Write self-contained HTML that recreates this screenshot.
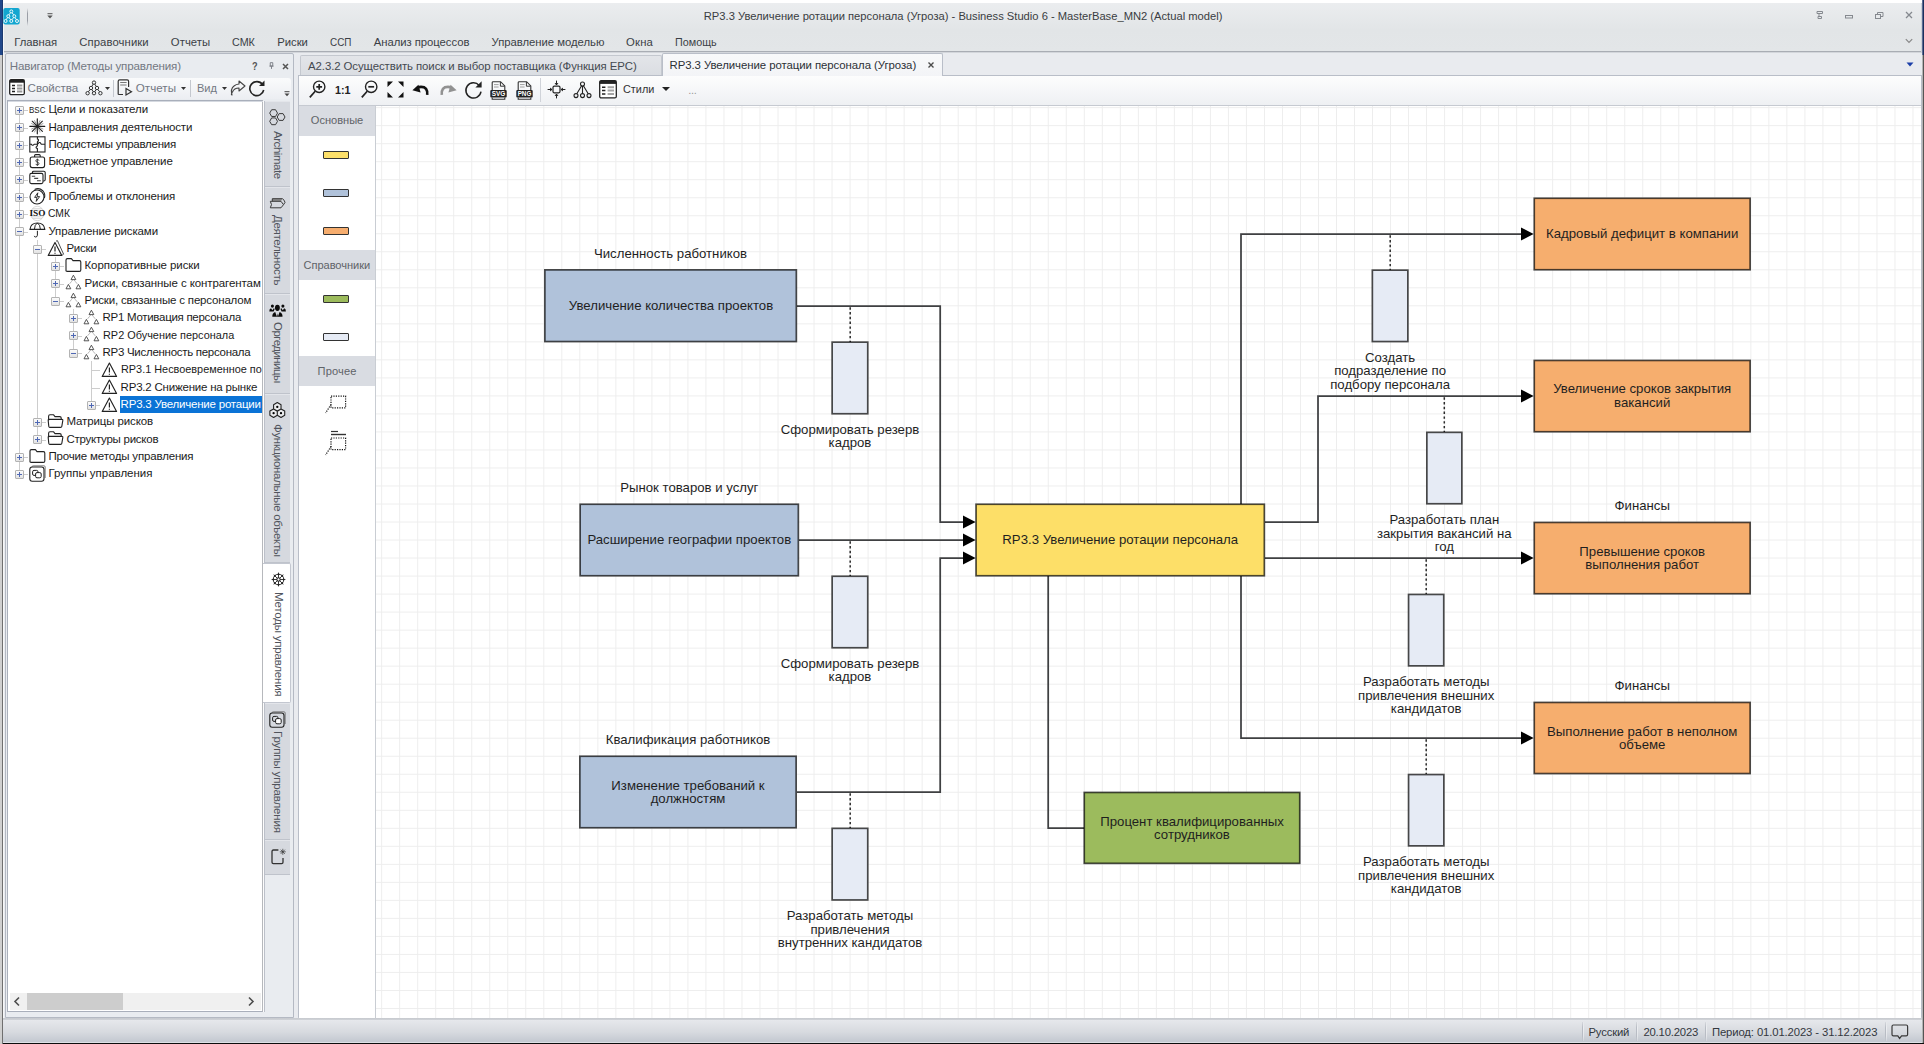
<!DOCTYPE html>
<html><head><meta charset="utf-8"><title>RP3.3</title>
<style>
html,body{margin:0;padding:0;}
body{width:1924px;height:1044px;position:relative;overflow:hidden;background:#e9ebef;font-family:"Liberation Sans", sans-serif;}
div{box-sizing:border-box;}
svg{position:absolute;overflow:visible;}
.dt{position:absolute;text-align:center;font-size:13.2px;line-height:13.45px;color:#1f1f1f;white-space:pre;}
</style></head><body>
<div style="position:absolute;left:0px;top:0px;width:1924px;height:3px;background:#ffffff"></div>
<div style="position:absolute;left:0px;top:3px;width:1924px;height:49px;background:linear-gradient(#ebedef,#e2e5e7 55%,#e3e6e8)"></div>
<div style="position:absolute;left:0px;top:51px;width:1924px;height:1px;background:#a9adb4"></div>
<div style="position:absolute;left:0px;top:52px;width:1924px;height:1px;background:#d3d6db"></div>
<div style="position:absolute;left:0px;top:0px;width:3px;height:55px;background:#21488b"></div>
<div style="position:absolute;left:2px;top:0px;width:1px;height:55px;background:#1c3a70"></div>
<div style="position:absolute;left:0px;top:55px;width:2px;height:989px;background:#cfcfcf"></div>
<div style="position:absolute;left:2px;top:55px;width:1px;height:989px;background:#6f6f6f"></div>
<div style="position:absolute;left:3px;top:3px;width:1px;height:1039px;background:#f6f7f8"></div>
<div style="position:absolute;left:1921px;top:3px;width:1px;height:1040px;background:#cfd2d8"></div>
<div style="position:absolute;left:1922px;top:0px;width:2px;height:55px;background:#1b2f5c"></div>
<div style="position:absolute;left:1922px;top:0px;width:1px;height:55px;background:#5a6c94"></div>
<div style="position:absolute;left:1922px;top:55px;width:1px;height:988px;background:#b4b4b4"></div>
<div style="position:absolute;left:1923px;top:55px;width:1px;height:988px;background:#555"></div>
<svg style="left:3px;top:8px" width="17" height="17" viewBox="0 0 17 17">
<rect x="0.3" y="0" width="16.4" height="16.4" rx="2" fill="#13a6d0"/>
<g fill="none" stroke="#fff" stroke-width="0.9">
<circle cx="8.3" cy="3.4" r="1.5"/><circle cx="5.3" cy="8.2" r="1.5"/><circle cx="11.3" cy="8.2" r="1.5"/>
<circle cx="2.6" cy="13" r="1.5"/><circle cx="8.3" cy="13" r="1.5"/><circle cx="14" cy="13" r="1.5"/>
<path d="M7.5 4.8L6 6.8M9.1 4.8L10.6 6.8M4.5 9.6L3.3 11.6M6.1 9.6L7.5 11.6M10.5 9.6L9.1 11.6M12.1 9.6L13.3 11.6"/></g></svg>
<div style="position:absolute;left:27px;top:8px;width:1px;height:18px;background:linear-gradient(rgba(150,154,160,0),#9a9ea6 30%,#9a9ea6 70%,rgba(150,154,160,0))"></div>
<svg style="left:47px;top:13px" width="6" height="6" viewBox="0 0 6 6"><path d="M0.5 0.7H5.5" stroke="#555" stroke-width="1"/><path d="M0.3 2.6H5.7L3 5.4Z" fill="#555"/></svg>
<div style="position:absolute;left:703.80px;top:8.04px;height:16px;line-height:16px;font-size:11.2px;font-weight:400;color:#3a3d42;letter-spacing:-0.005px;white-space:pre;">RP3.3 Увеличение ротации персонала (Угроза) - Business Studio 6 - MasterBase_MN2 (Actual model)</div>
<svg style="left:1812px;top:8px" width="110" height="14" viewBox="0 0 110 14" fill="none" stroke="#85898f" stroke-width="1">
<path d="M5 3.5H10.5V5.5H5ZM7 5.5V8.5M6 8.5H9.5V10.5H6Z"/>
<rect x="33.5" y="7.5" width="7" height="2.5"/>
<rect x="63.5" y="6.5" width="5" height="4"/><path d="M65.5 6.5V4.5H71V8.5H68.5"/>
<path d="M94 4L100 10M100 4L94 10" stroke-width="1.3"/>
</svg>
<svg style="left:1905px;top:38px" width="8" height="7" viewBox="0 0 8 7"><path d="M0.8 1.2L4 4.5L7.2 1.2" fill="none" stroke="#888" stroke-width="1.2"/></svg>
<div style="position:absolute;left:14.20px;top:33.54px;height:16px;line-height:16px;font-size:11.3px;font-weight:400;color:#3b3f46;letter-spacing:-0.017px;white-space:pre;">Главная</div>
<div style="position:absolute;left:79.20px;top:33.54px;height:16px;line-height:16px;font-size:11.3px;font-weight:400;color:#3b3f46;letter-spacing:0.105px;white-space:pre;">Справочники</div>
<div style="position:absolute;left:170.80px;top:33.54px;height:16px;line-height:16px;font-size:11.3px;font-weight:400;color:#3b3f46;letter-spacing:0.068px;white-space:pre;">Отчеты</div>
<div style="position:absolute;left:231.90px;top:33.54px;height:16px;line-height:16px;font-size:11.3px;font-weight:400;color:#3b3f46;letter-spacing:0.000px;white-space:pre;transform-origin:0 50%;transform:scaleX(0.9529);">СМК</div>
<div style="position:absolute;left:277.30px;top:33.54px;height:16px;line-height:16px;font-size:11.3px;font-weight:400;color:#3b3f46;letter-spacing:-0.038px;white-space:pre;">Риски</div>
<div style="position:absolute;left:330.00px;top:33.54px;height:16px;line-height:16px;font-size:11.3px;font-weight:400;color:#3b3f46;letter-spacing:0.000px;white-space:pre;transform-origin:0 50%;transform:scaleX(0.8757);">ССП</div>
<div style="position:absolute;left:373.80px;top:33.54px;height:16px;line-height:16px;font-size:11.3px;font-weight:400;color:#3b3f46;letter-spacing:-0.046px;white-space:pre;">Анализ процессов</div>
<div style="position:absolute;left:491.50px;top:33.54px;height:16px;line-height:16px;font-size:11.3px;font-weight:400;color:#3b3f46;letter-spacing:-0.018px;white-space:pre;">Управление моделью</div>
<div style="position:absolute;left:626.10px;top:33.54px;height:16px;line-height:16px;font-size:11.3px;font-weight:400;color:#3b3f46;letter-spacing:0.178px;white-space:pre;">Окна</div>
<div style="position:absolute;left:675.00px;top:33.54px;height:16px;line-height:16px;font-size:11.3px;font-weight:400;color:#3b3f46;letter-spacing:0.000px;white-space:pre;transform-origin:0 50%;transform:scaleX(0.9555);">Помощь</div>
<div style="position:absolute;left:5px;top:53px;width:289px;height:965px;background:#e9ecf0;border:1px solid #b4b9c3;border-radius:2px 2px 0 0"></div>
<div style="position:absolute;left:9.70px;top:57.61px;height:16px;line-height:16px;font-size:11.6px;font-weight:400;color:#737882;letter-spacing:-0.144px;white-space:pre;">Навигатор (Методы управления)</div>
<div style="position:absolute;left:252.10px;top:57.62px;height:16px;line-height:16px;font-size:11.5px;font-weight:700;color:#555;letter-spacing:0.000px;white-space:pre;transform-origin:0 50%;transform:scaleX(0.7964);">?</div>
<svg style="left:268.5px;top:62px" width="5" height="8" viewBox="0 0 6 9"><path d="M1.5 0.5H4.5V4.5H1.5ZM0.5 4.7H5.5M3 4.7V8" fill="none" stroke="#777b82" stroke-width="1.1"/></svg>
<svg style="left:282px;top:63px" width="7" height="7" viewBox="0 0 7 7"><path d="M1 1L6 6M6 1L1 6" stroke="#555" stroke-width="1.5"/></svg>
<div style="position:absolute;left:8px;top:77.5px;width:283px;height:21px;background:linear-gradient(#fafbfc,#eceef2);border-radius:3px"></div>
<svg style="left:8.5px;top:79px" width="16" height="17" viewBox="0 0 16 17"><rect x="0.7" y="0.7" width="14.6" height="15" rx="1.5" fill="#fff" stroke="#222" stroke-width="1.3"/><rect x="0.7" y="0.7" width="14.6" height="3" fill="#222"/>
<path d="M3 6.5H6M3 9.5H6M3 12.5H6" stroke="#222" stroke-width="1.4"/><path d="M8 6.5H13.3M8 9.5H13.3M8 12.5H13.3" stroke="#9a9a9a" stroke-width="1.8"/></svg>
<div style="position:absolute;left:27.60px;top:80.31px;height:16px;line-height:16px;font-size:11.6px;font-weight:400;color:#737882;letter-spacing:-0.046px;white-space:pre;">Свойства</div>
<svg style="left:85px;top:80px" width="18" height="16" viewBox="0 0 18 16" fill="none" stroke="#333" stroke-width="1">
<circle cx="9" cy="2.6" r="1.7"/><circle cx="6" cy="8" r="1.7"/><circle cx="12" cy="8" r="1.7"/><circle cx="2.6" cy="13.2" r="1.7"/><circle cx="9" cy="13.2" r="1.7"/><circle cx="15.4" cy="13.2" r="1.7"/>
<path d="M8.2 4.1L6.8 6.4M9.8 4.1L11.2 6.4M5.2 9.5L3.4 11.7M6.8 9.5L8.2 11.7M11.2 9.5L9.8 11.7M12.8 9.5L14.6 11.7"/></svg>
<svg style="left:105px;top:87px" width="5" height="3" viewBox="0 0 5 3"><path d="M0 0H5L2.5 3Z" fill="#333"/></svg>
<div style="position:absolute;left:113px;top:80px;width:1px;height:17px;background:#c4c8cf"></div>
<svg style="left:117px;top:79px" width="16" height="17" viewBox="0 0 16 17" fill="none" stroke="#333" stroke-width="1.2">
<path d="M1.2 15.5V2.2Q1.2 0.8 2.6 0.8H10.2Q11.6 0.8 11.6 2.2V8M1.2 15.5H6"/><path d="M3.2 3.5H9.6M3.2 6H9.6" stroke="#777"/><path d="M9 9.5L14.5 12.7L9 16Z"/></svg>
<div style="position:absolute;left:135.70px;top:80.31px;height:16px;line-height:16px;font-size:11.6px;font-weight:400;color:#737882;letter-spacing:0.064px;white-space:pre;">Отчеты</div>
<svg style="left:181px;top:87px" width="5" height="3" viewBox="0 0 5 3"><path d="M0 0H5L2.5 3Z" fill="#333"/></svg>
<div style="position:absolute;left:190px;top:80px;width:1px;height:17px;background:#c4c8cf"></div>
<div style="position:absolute;left:196.90px;top:80.31px;height:16px;line-height:16px;font-size:11.6px;font-weight:400;color:#737882;letter-spacing:0.000px;white-space:pre;transform-origin:0 50%;transform:scaleX(0.9531);">Вид</div>
<svg style="left:222px;top:87px" width="5" height="3" viewBox="0 0 5 3"><path d="M0 0H5L2.5 3Z" fill="#333"/></svg>
<svg style="left:230px;top:80px" width="16" height="16" viewBox="0 0 16 16" fill="none" stroke="#444" stroke-width="1.1"><path d="M9 1L15 6L9 11V8Q4 8 2.5 12Q0.5 14.5 2 15Q0.2 9 4 6Q6 4.2 9 4Z" stroke-linejoin="round"/></svg>
<svg style="left:248px;top:79px" width="18" height="18" viewBox="0 0 18 18" fill="none" stroke="#222" stroke-width="1.6"><path d="M14.5 5.5A7 7 0 1 0 15.7 11"/><path d="M16.5 1.5V7H11Z" fill="#222" stroke="none"/></svg>
<svg style="left:284px;top:91px" width="6" height="6" viewBox="0 0 6 6"><path d="M0.5 0.7H5.5" stroke="#444" stroke-width="1"/><path d="M0.5 2.6H5.5L3 5.2Z" fill="#444"/></svg>
<div style="position:absolute;left:7px;top:100px;width:256px;height:912px;background:#fff;border:1px solid #a9afbb;border-right-color:#b6b8bc"></div>
<div style="position:absolute;left:263px;top:101px;width:1px;height:911px;background:#fdfdfd"></div>
<div style="position:absolute;left:8px;top:101px;width:255px;height:1px;background:#d5d9e0"></div>
<div style="position:absolute;left:10px;top:993px;width:251px;height:17px;background:#f0f0f0"></div>
<div style="position:absolute;left:27px;top:993px;width:96px;height:17px;background:#cdcdcd"></div>
<svg style="left:13px;top:996px" width="8" height="11" viewBox="0 0 8 11"><path d="M6 1.5L2 5.5L6 9.5" fill="none" stroke="#4d4d4d" stroke-width="1.6"/></svg>
<svg style="left:247px;top:996px" width="8" height="11" viewBox="0 0 8 11"><path d="M2 1.5L6 5.5L2 9.5" fill="none" stroke="#4d4d4d" stroke-width="1.6"/></svg>
<div style="position:absolute;left:19px;top:115px;width:1px;height:355px;background:#cdcdcd"></div>
<div style="position:absolute;left:37px;top:240px;width:1px;height:196px;background:#cdcdcd"></div>
<div style="position:absolute;left:55px;top:257px;width:1px;height:40px;background:#cdcdcd"></div>
<div style="position:absolute;left:73px;top:309px;width:1px;height:40px;background:#cdcdcd"></div>
<div style="position:absolute;left:91px;top:361px;width:1px;height:40px;background:#cdcdcd"></div>
<div style="position:absolute;left:24px;top:110px;width:4px;height:1px;background:#cdcdcd"></div>
<div style="position:absolute;left:15px;top:106px;width:9px;height:9px;border:1px solid #b3b3b3;border-radius:1px;background:linear-gradient(#fbfbfb,#e2e2e2)"></div>
<div style="position:absolute;left:17px;top:110px;width:5px;height:1px;background:#4f68b4"></div>
<div style="position:absolute;left:19px;top:108px;width:1px;height:5px;background:#4f68b4"></div>
<svg style="left:29px;top:100.8px" width="17" height="17" viewBox="0 0 17 17"><text x="0" y="11.6" font-size="8.8" font-family='"Liberation Sans",sans-serif' fill="#1a1a1a" textLength="16.4" lengthAdjust="spacingAndGlyphs">BSC</text></svg>
<div style="position:absolute;left:48.40px;top:101.42px;height:16px;line-height:16px;font-size:11.5px;font-weight:400;color:#1b1b1b;letter-spacing:-0.035px;white-space:pre;">Цели и показатели</div>
<div style="position:absolute;left:24px;top:128px;width:4px;height:1px;background:#cdcdcd"></div>
<div style="position:absolute;left:15px;top:123px;width:9px;height:9px;border:1px solid #b3b3b3;border-radius:1px;background:linear-gradient(#fbfbfb,#e2e2e2)"></div>
<div style="position:absolute;left:17px;top:127px;width:5px;height:1px;background:#4f68b4"></div>
<div style="position:absolute;left:19px;top:125px;width:1px;height:5px;background:#4f68b4"></div>
<svg style="left:29px;top:118.1px" width="17" height="17" viewBox="0 0 17 17"><g stroke="#1e1e1e" stroke-linecap="round"><path d="M8.3 0.8V15.8M0.8 8.3H15.8" stroke-width="1.15"/><path d="M3.2 3.2L13.4 13.4M13.4 3.2L3.2 13.4" stroke-width="1.05"/><path d="M5.6 2.6L11 14M11 2.6L5.6 14M2.6 5.6L14 11M14 5.6L2.6 11" stroke-width="0.55" stroke="#555"/><circle cx="8.3" cy="8.3" r="1.5" fill="#1e1e1e" stroke="none"/></g></svg>
<div style="position:absolute;left:48.40px;top:118.76px;height:16px;line-height:16px;font-size:11.5px;font-weight:400;color:#1b1b1b;letter-spacing:-0.185px;white-space:pre;">Направления деятельности</div>
<div style="position:absolute;left:24px;top:145px;width:4px;height:1px;background:#cdcdcd"></div>
<div style="position:absolute;left:15px;top:141px;width:9px;height:9px;border:1px solid #b3b3b3;border-radius:1px;background:linear-gradient(#fbfbfb,#e2e2e2)"></div>
<div style="position:absolute;left:17px;top:145px;width:5px;height:1px;background:#4f68b4"></div>
<div style="position:absolute;left:19px;top:143px;width:1px;height:5px;background:#4f68b4"></div>
<svg style="left:29px;top:135.5px" width="17" height="17" viewBox="0 0 17 17"><g fill="none" stroke="#222" stroke-width="1.1"><rect x="0.8" y="0.8" width="15.2" height="15.2"/><path d="M8.4 0.8V3Q9.8 3.4 9.4 4.6Q8.8 5.6 8.4 6V9.5Q8 10.6 7.2 11Q6.6 12 8.4 12.6V16M0.8 8.2H2.4Q2.8 9.6 4 9.2Q5 8.6 5.4 8.2H8.4M8.4 8.2Q9.5 7.6 10 6.6Q11 6 11.8 7.6Q12.4 8.4 13.4 8.2H16"/></g></svg>
<div style="position:absolute;left:48.40px;top:136.09px;height:16px;line-height:16px;font-size:11.5px;font-weight:400;color:#1b1b1b;letter-spacing:-0.239px;white-space:pre;">Подсистемы управления</div>
<div style="position:absolute;left:24px;top:162px;width:4px;height:1px;background:#cdcdcd"></div>
<div style="position:absolute;left:15px;top:158px;width:9px;height:9px;border:1px solid #b3b3b3;border-radius:1px;background:linear-gradient(#fbfbfb,#e2e2e2)"></div>
<div style="position:absolute;left:17px;top:162px;width:5px;height:1px;background:#4f68b4"></div>
<div style="position:absolute;left:19px;top:160px;width:1px;height:5px;background:#4f68b4"></div>
<svg style="left:29px;top:152.8px" width="17" height="17" viewBox="0 0 17 17"><g fill="none" stroke="#222" stroke-width="1.1"><rect x="1.2" y="4" width="14.4" height="10.6" rx="2"/><path d="M5.6 4V2.6Q5.6 1.6 6.6 1.6H10.2Q11.2 1.6 11.2 2.6V4"/><path d="M10 7.6Q10 6.6 8.4 6.6Q6.8 6.6 6.8 7.8Q6.8 8.9 8.4 9.2Q10 9.5 10 10.7Q10 11.9 8.4 11.9Q6.8 11.9 6.8 10.9M8.4 5.6V12.9" stroke-width="0.8"/></g></svg>
<div style="position:absolute;left:48.40px;top:153.43px;height:16px;line-height:16px;font-size:11.5px;font-weight:400;color:#1b1b1b;letter-spacing:-0.129px;white-space:pre;">Бюджетное управление</div>
<div style="position:absolute;left:24px;top:180px;width:4px;height:1px;background:#cdcdcd"></div>
<div style="position:absolute;left:15px;top:175px;width:9px;height:9px;border:1px solid #b3b3b3;border-radius:1px;background:linear-gradient(#fbfbfb,#e2e2e2)"></div>
<div style="position:absolute;left:17px;top:179px;width:5px;height:1px;background:#4f68b4"></div>
<div style="position:absolute;left:19px;top:177px;width:1px;height:5px;background:#4f68b4"></div>
<svg style="left:29px;top:170.1px" width="17" height="17" viewBox="0 0 17 17"><g fill="none" stroke="#222" stroke-width="1.1"><path d="M3.5 3.2V2.4Q3.5 1.2 4.8 1.2H14.8Q16.2 1.2 16.2 2.4V9.6Q16.2 11 14.8 11H14.2"/><rect x="0.8" y="3.4" width="13.2" height="10.2" rx="1.6"/><path d="M2.8 6.2H6.2M5.2 8.4H9.2M8 10.8H11.8" stroke="#444"/></g></svg>
<div style="position:absolute;left:48.40px;top:170.76px;height:16px;line-height:16px;font-size:11.5px;font-weight:400;color:#1b1b1b;letter-spacing:-0.293px;white-space:pre;">Проекты</div>
<div style="position:absolute;left:24px;top:197px;width:4px;height:1px;background:#cdcdcd"></div>
<div style="position:absolute;left:15px;top:193px;width:9px;height:9px;border:1px solid #b3b3b3;border-radius:1px;background:linear-gradient(#fbfbfb,#e2e2e2)"></div>
<div style="position:absolute;left:17px;top:197px;width:5px;height:1px;background:#4f68b4"></div>
<div style="position:absolute;left:19px;top:195px;width:1px;height:5px;background:#4f68b4"></div>
<svg style="left:29px;top:187.5px" width="17" height="17" viewBox="0 0 17 17"><g fill="none" stroke="#222" stroke-width="1.1"><circle cx="8" cy="9" r="7"/><path d="M5.6 1.6Q10 -0.8 14 3Q16.6 6 15.4 10"/><path d="M8.8 4.8L5.6 9.4H8L7.2 13.4L10.6 8.6H8.2Z" stroke-width="0.9"/></g></svg>
<div style="position:absolute;left:48.40px;top:188.10px;height:16px;line-height:16px;font-size:11.5px;font-weight:400;color:#1b1b1b;letter-spacing:-0.194px;white-space:pre;">Проблемы и отклонения</div>
<div style="position:absolute;left:24px;top:214px;width:4px;height:1px;background:#cdcdcd"></div>
<div style="position:absolute;left:15px;top:210px;width:9px;height:9px;border:1px solid #b3b3b3;border-radius:1px;background:linear-gradient(#fbfbfb,#e2e2e2)"></div>
<div style="position:absolute;left:17px;top:214px;width:5px;height:1px;background:#4f68b4"></div>
<div style="position:absolute;left:19px;top:212px;width:1px;height:5px;background:#4f68b4"></div>
<svg style="left:29px;top:204.8px" width="17" height="17" viewBox="0 0 17 17"><g><ellipse cx="8.3" cy="8.5" rx="6.6" ry="7.2" fill="none" stroke="#c4c4c4" stroke-width="0.6"/><path d="M2.4 5.2H14.2M2.4 11.8H14.2M3.6 3.6H13M3.6 13.4H13" stroke="#c4c4c4" stroke-width="0.6"/><text x="0.4" y="11.4" font-size="8.2" font-weight="700" font-family='"Liberation Serif",serif' fill="#111" textLength="16" lengthAdjust="spacingAndGlyphs">ISO</text></g></svg>
<div style="position:absolute;left:48.40px;top:205.43px;height:16px;line-height:16px;font-size:11.5px;font-weight:400;color:#1b1b1b;letter-spacing:0.000px;white-space:pre;transform-origin:0 50%;transform:scaleX(0.8991);">СМК</div>
<div style="position:absolute;left:24px;top:232px;width:4px;height:1px;background:#cdcdcd"></div>
<div style="position:absolute;left:15px;top:227px;width:9px;height:9px;border:1px solid #b3b3b3;border-radius:1px;background:linear-gradient(#fbfbfb,#e2e2e2)"></div>
<div style="position:absolute;left:17px;top:231px;width:5px;height:1px;background:#4f68b4"></div>
<svg style="left:29px;top:222.1px" width="17" height="17" viewBox="0 0 17 17"><g fill="none" stroke="#222" stroke-width="1.1"><path d="M1 7.4Q1.6 1 8.4 1Q15.2 1 15.8 7.4Z"/><path d="M5.4 7.4Q5.6 2.4 8.4 1Q11.2 2.4 11.4 7.4M8.4 8.8V13.2Q8.3 15 6.6 15Q5.4 15 5.2 13.9" stroke-width="1"/></g></svg>
<div style="position:absolute;left:48.40px;top:222.77px;height:16px;line-height:16px;font-size:11.5px;font-weight:400;color:#1b1b1b;letter-spacing:-0.119px;white-space:pre;">Управление рисками</div>
<div style="position:absolute;left:42px;top:249px;width:4px;height:1px;background:#cdcdcd"></div>
<div style="position:absolute;left:33px;top:245px;width:9px;height:9px;border:1px solid #b3b3b3;border-radius:1px;background:linear-gradient(#fbfbfb,#e2e2e2)"></div>
<div style="position:absolute;left:35px;top:249px;width:5px;height:1px;background:#4f68b4"></div>
<svg style="left:47px;top:239.5px" width="17" height="17" viewBox="0 0 17 17"><g fill="none" stroke="#222" stroke-width="1.15" stroke-linejoin="round"><path d="M8 2.4L14.8 15.4H1.2Z"/><path d="M9 1.2L10.4 0.6L16.6 14.2L15.2 15" stroke-width="0.8"/><path d="M8 6.6V11.4M8 12.8V13.8" stroke-width="1.2"/></g></svg>
<div style="position:absolute;left:66.45px;top:240.10px;height:16px;line-height:16px;font-size:11.5px;font-weight:400;color:#1b1b1b;letter-spacing:-0.266px;white-space:pre;">Риски</div>
<div style="position:absolute;left:60px;top:266px;width:4px;height:1px;background:#cdcdcd"></div>
<div style="position:absolute;left:51px;top:262px;width:9px;height:9px;border:1px solid #b3b3b3;border-radius:1px;background:linear-gradient(#fbfbfb,#e2e2e2)"></div>
<div style="position:absolute;left:53px;top:266px;width:5px;height:1px;background:#4f68b4"></div>
<div style="position:absolute;left:55px;top:264px;width:1px;height:5px;background:#4f68b4"></div>
<svg style="left:65px;top:256.8px" width="17" height="17" viewBox="0 0 17 17"><g fill="none" stroke="#222" stroke-width="1.1" stroke-linejoin="round"><path d="M1 14.2V3Q1 1.6 2.4 1.6H6.4L8 3.6H14.4Q15.8 3.6 15.8 5V13Q15.8 14.4 14.4 14.4H2.2Q1 14.4 1 13.2"/></g></svg>
<div style="position:absolute;left:84.50px;top:257.44px;height:16px;line-height:16px;font-size:11.5px;font-weight:400;color:#1b1b1b;letter-spacing:-0.083px;white-space:pre;">Корпоративные риски</div>
<div style="position:absolute;left:60px;top:284px;width:4px;height:1px;background:#cdcdcd"></div>
<div style="position:absolute;left:51px;top:279px;width:9px;height:9px;border:1px solid #b3b3b3;border-radius:1px;background:linear-gradient(#fbfbfb,#e2e2e2)"></div>
<div style="position:absolute;left:53px;top:283px;width:5px;height:1px;background:#4f68b4"></div>
<div style="position:absolute;left:55px;top:281px;width:1px;height:5px;background:#4f68b4"></div>
<svg style="left:65px;top:274.2px" width="17" height="17" viewBox="0 0 17 17"><g fill="none" stroke="#444" stroke-width="0.9" stroke-linejoin="round"><path d="M8.4 1.2L10.8 5.6H6Z"/><path d="M3.4 10.4L5.8 14.8H1Z"/><path d="M13.4 10.4L15.8 14.8H11Z"/><path d="M7.4 6.4L4.6 9.8M9.4 6.4L12.2 9.8" stroke-dasharray="1.4 1.2" stroke="#777"/></g></svg>
<div style="position:absolute;left:0;top:274.77px;width:262px;height:16px;overflow:hidden"><div style="position:absolute;left:84.50px;top:0px;height:16px;line-height:16px;font-size:11.5px;font-weight:400;color:#1b1b1b;letter-spacing:-0.087px;white-space:pre;">Риски, связанные с контрагентам</div></div>
<div style="position:absolute;left:60px;top:301px;width:4px;height:1px;background:#cdcdcd"></div>
<div style="position:absolute;left:51px;top:297px;width:9px;height:9px;border:1px solid #b3b3b3;border-radius:1px;background:linear-gradient(#fbfbfb,#e2e2e2)"></div>
<div style="position:absolute;left:53px;top:301px;width:5px;height:1px;background:#4f68b4"></div>
<svg style="left:65px;top:291.5px" width="17" height="17" viewBox="0 0 17 17"><g fill="none" stroke="#444" stroke-width="0.9" stroke-linejoin="round"><path d="M8.4 1.2L10.8 5.6H6Z"/><path d="M3.4 10.4L5.8 14.8H1Z"/><path d="M13.4 10.4L15.8 14.8H11Z"/><path d="M7.4 6.4L4.6 9.8M9.4 6.4L12.2 9.8" stroke-dasharray="1.4 1.2" stroke="#777"/></g></svg>
<div style="position:absolute;left:84.50px;top:292.11px;height:16px;line-height:16px;font-size:11.5px;font-weight:400;color:#1b1b1b;letter-spacing:-0.183px;white-space:pre;">Риски, связанные с персоналом</div>
<div style="position:absolute;left:78px;top:318px;width:4px;height:1px;background:#cdcdcd"></div>
<div style="position:absolute;left:69px;top:314px;width:9px;height:9px;border:1px solid #b3b3b3;border-radius:1px;background:linear-gradient(#fbfbfb,#e2e2e2)"></div>
<div style="position:absolute;left:71px;top:318px;width:5px;height:1px;background:#4f68b4"></div>
<div style="position:absolute;left:73px;top:316px;width:1px;height:5px;background:#4f68b4"></div>
<svg style="left:83px;top:308.8px" width="17" height="17" viewBox="0 0 17 17"><g fill="none" stroke="#444" stroke-width="0.9" stroke-linejoin="round"><path d="M8.4 1.2L10.8 5.6H6Z"/><path d="M3.4 10.4L5.8 14.8H1Z"/><path d="M13.4 10.4L15.8 14.8H11Z"/><path d="M7.4 6.4L4.6 9.8M9.4 6.4L12.2 9.8" stroke-dasharray="1.4 1.2" stroke="#777"/></g></svg>
<div style="position:absolute;left:102.55px;top:309.44px;height:16px;line-height:16px;font-size:11.5px;font-weight:400;color:#1b1b1b;letter-spacing:-0.288px;white-space:pre;">RP1 Мотивация персонала</div>
<div style="position:absolute;left:78px;top:336px;width:4px;height:1px;background:#cdcdcd"></div>
<div style="position:absolute;left:69px;top:331px;width:9px;height:9px;border:1px solid #b3b3b3;border-radius:1px;background:linear-gradient(#fbfbfb,#e2e2e2)"></div>
<div style="position:absolute;left:71px;top:335px;width:5px;height:1px;background:#4f68b4"></div>
<div style="position:absolute;left:73px;top:333px;width:1px;height:5px;background:#4f68b4"></div>
<svg style="left:83px;top:326.2px" width="17" height="17" viewBox="0 0 17 17"><g fill="none" stroke="#444" stroke-width="0.9" stroke-linejoin="round"><path d="M8.4 1.2L10.8 5.6H6Z"/><path d="M3.4 10.4L5.8 14.8H1Z"/><path d="M13.4 10.4L15.8 14.8H11Z"/><path d="M7.4 6.4L4.6 9.8M9.4 6.4L12.2 9.8" stroke-dasharray="1.4 1.2" stroke="#777"/></g></svg>
<div style="position:absolute;left:102.55px;top:326.78px;height:16px;line-height:16px;font-size:11.5px;font-weight:400;color:#1b1b1b;letter-spacing:0.000px;white-space:pre;transform-origin:0 50%;transform:scaleX(0.9477);">RP2 Обучение персонала</div>
<div style="position:absolute;left:78px;top:353px;width:4px;height:1px;background:#cdcdcd"></div>
<div style="position:absolute;left:69px;top:349px;width:9px;height:9px;border:1px solid #b3b3b3;border-radius:1px;background:linear-gradient(#fbfbfb,#e2e2e2)"></div>
<div style="position:absolute;left:71px;top:353px;width:5px;height:1px;background:#4f68b4"></div>
<svg style="left:83px;top:343.5px" width="17" height="17" viewBox="0 0 17 17"><g fill="none" stroke="#444" stroke-width="0.9" stroke-linejoin="round"><path d="M8.4 1.2L10.8 5.6H6Z"/><path d="M3.4 10.4L5.8 14.8H1Z"/><path d="M13.4 10.4L15.8 14.8H11Z"/><path d="M7.4 6.4L4.6 9.8M9.4 6.4L12.2 9.8" stroke-dasharray="1.4 1.2" stroke="#777"/></g></svg>
<div style="position:absolute;left:102.55px;top:344.11px;height:16px;line-height:16px;font-size:11.5px;font-weight:400;color:#1b1b1b;letter-spacing:-0.284px;white-space:pre;">RP3 Численность персонала</div>
<div style="position:absolute;left:91px;top:370px;width:9px;height:1px;background:#cdcdcd"></div>
<svg style="left:101px;top:360.8px" width="17" height="17" viewBox="0 0 17 17"><g fill="none" stroke="#222" stroke-width="1.15" stroke-linejoin="round"><path d="M8.4 2L15.6 15.4H1.2Z"/><path d="M8.4 6.4V11.4M8.4 12.8V13.8" stroke-width="1.2"/></g></svg>
<div style="position:absolute;left:0;top:361.45px;width:262px;height:16px;overflow:hidden"><div style="position:absolute;left:120.60px;top:0px;height:16px;line-height:16px;font-size:11.5px;font-weight:400;color:#1b1b1b;letter-spacing:0.000px;white-space:pre;transform-origin:0 50%;transform:scaleX(0.9456);">RP3.1 Несвоевременное по</div></div>
<div style="position:absolute;left:91px;top:388px;width:9px;height:1px;background:#cdcdcd"></div>
<svg style="left:101px;top:378.2px" width="17" height="17" viewBox="0 0 17 17"><g fill="none" stroke="#222" stroke-width="1.15" stroke-linejoin="round"><path d="M8.4 2L15.6 15.4H1.2Z"/><path d="M8.4 6.4V11.4M8.4 12.8V13.8" stroke-width="1.2"/></g></svg>
<div style="position:absolute;left:120.60px;top:378.78px;height:16px;line-height:16px;font-size:11.5px;font-weight:400;color:#1b1b1b;letter-spacing:-0.205px;white-space:pre;">RP3.2 Снижение на рынке</div>
<div style="position:absolute;left:96px;top:405px;width:4px;height:1px;background:#cdcdcd"></div>
<div style="position:absolute;left:87px;top:401px;width:9px;height:9px;border:1px solid #b3b3b3;border-radius:1px;background:linear-gradient(#fbfbfb,#e2e2e2)"></div>
<div style="position:absolute;left:89px;top:405px;width:5px;height:1px;background:#4f68b4"></div>
<div style="position:absolute;left:91px;top:403px;width:1px;height:5px;background:#4f68b4"></div>
<svg style="left:101px;top:395.5px" width="17" height="17" viewBox="0 0 17 17"><g fill="none" stroke="#222" stroke-width="1.15" stroke-linejoin="round"><path d="M8.4 2L15.6 15.4H1.2Z"/><path d="M8.4 6.4V11.4M8.4 12.8V13.8" stroke-width="1.2"/></g></svg>
<div style="position:absolute;left:119.5px;top:395.5px;width:142px;height:17.2px;background:#0a73d6"></div>
<div style="position:absolute;left:0;top:396.12px;width:261.5px;height:16px;overflow:hidden"><div style="position:absolute;left:120.60px;top:0px;height:16px;line-height:16px;font-size:11.5px;font-weight:400;color:#ffffff;letter-spacing:-0.210px;white-space:pre;">RP3.3 Увеличение ротации</div></div>
<div style="position:absolute;left:42px;top:422px;width:4px;height:1px;background:#cdcdcd"></div>
<div style="position:absolute;left:33px;top:418px;width:9px;height:9px;border:1px solid #b3b3b3;border-radius:1px;background:linear-gradient(#fbfbfb,#e2e2e2)"></div>
<div style="position:absolute;left:35px;top:422px;width:5px;height:1px;background:#4f68b4"></div>
<div style="position:absolute;left:37px;top:420px;width:1px;height:5px;background:#4f68b4"></div>
<svg style="left:47px;top:412.8px" width="17" height="17" viewBox="0 0 17 17"><g fill="none" stroke="#222" stroke-width="1.1" stroke-linejoin="round"><path d="M1.6 7.4V3.2Q1.6 1.8 3 1.8H6.6L8 3.6H12.8Q14.2 3.6 14.2 5V6.4"/><path d="M2.8 14.4H13.6Q14.6 14.4 14.8 13.4L15.8 7.6Q16 6.4 14.8 6.4H2.2Q1 6.4 1.2 7.6L1.8 13.4Q2 14.4 2.8 14.4Z"/></g></svg>
<div style="position:absolute;left:66.45px;top:413.45px;height:16px;line-height:16px;font-size:11.5px;font-weight:400;color:#1b1b1b;letter-spacing:-0.114px;white-space:pre;">Матрицы рисков</div>
<div style="position:absolute;left:42px;top:440px;width:4px;height:1px;background:#cdcdcd"></div>
<div style="position:absolute;left:33px;top:435px;width:9px;height:9px;border:1px solid #b3b3b3;border-radius:1px;background:linear-gradient(#fbfbfb,#e2e2e2)"></div>
<div style="position:absolute;left:35px;top:439px;width:5px;height:1px;background:#4f68b4"></div>
<div style="position:absolute;left:37px;top:437px;width:1px;height:5px;background:#4f68b4"></div>
<svg style="left:47px;top:430.2px" width="17" height="17" viewBox="0 0 17 17"><g fill="none" stroke="#222" stroke-width="1.1" stroke-linejoin="round"><path d="M1.6 7.4V3.2Q1.6 1.8 3 1.8H6.6L8 3.6H12.8Q14.2 3.6 14.2 5V6.4"/><path d="M2.8 14.4H13.6Q14.6 14.4 14.8 13.4L15.8 7.6Q16 6.4 14.8 6.4H2.2Q1 6.4 1.2 7.6L1.8 13.4Q2 14.4 2.8 14.4Z"/></g></svg>
<div style="position:absolute;left:66.45px;top:430.79px;height:16px;line-height:16px;font-size:11.5px;font-weight:400;color:#1b1b1b;letter-spacing:-0.254px;white-space:pre;">Структуры рисков</div>
<div style="position:absolute;left:24px;top:457px;width:4px;height:1px;background:#cdcdcd"></div>
<div style="position:absolute;left:15px;top:453px;width:9px;height:9px;border:1px solid #b3b3b3;border-radius:1px;background:linear-gradient(#fbfbfb,#e2e2e2)"></div>
<div style="position:absolute;left:17px;top:457px;width:5px;height:1px;background:#4f68b4"></div>
<div style="position:absolute;left:19px;top:455px;width:1px;height:5px;background:#4f68b4"></div>
<svg style="left:29px;top:447.5px" width="17" height="17" viewBox="0 0 17 17"><g fill="none" stroke="#222" stroke-width="1.1" stroke-linejoin="round"><path d="M1 14.2V3Q1 1.6 2.4 1.6H6.4L8 3.6H14.4Q15.8 3.6 15.8 5V13Q15.8 14.4 14.4 14.4H2.2Q1 14.4 1 13.2"/></g></svg>
<div style="position:absolute;left:48.40px;top:448.12px;height:16px;line-height:16px;font-size:11.5px;font-weight:400;color:#1b1b1b;letter-spacing:-0.161px;white-space:pre;">Прочие методы управления</div>
<div style="position:absolute;left:24px;top:474px;width:4px;height:1px;background:#cdcdcd"></div>
<div style="position:absolute;left:15px;top:470px;width:9px;height:9px;border:1px solid #b3b3b3;border-radius:1px;background:linear-gradient(#fbfbfb,#e2e2e2)"></div>
<div style="position:absolute;left:17px;top:474px;width:5px;height:1px;background:#4f68b4"></div>
<div style="position:absolute;left:19px;top:472px;width:1px;height:5px;background:#4f68b4"></div>
<svg style="left:29px;top:464.8px" width="17" height="17" viewBox="0 0 17 17"><g fill="none" stroke="#222" stroke-width="1.1"><path d="M3 1.8Q3 0.8 4.2 0.8H15Q16.2 0.8 16.2 2V13" stroke="#666" stroke-width="0.8"/><rect x="0.8" y="2" width="14.2" height="14.2" rx="2.4"/><rect x="3.6" y="5.4" width="5.4" height="5" rx="1.4" stroke-width="1"/><rect x="6.6" y="7.6" width="5.6" height="5.2" rx="1.4" fill="#fff" stroke-width="1"/></g></svg>
<div style="position:absolute;left:48.40px;top:465.46px;height:16px;line-height:16px;font-size:11.5px;font-weight:400;color:#1b1b1b;letter-spacing:-0.009px;white-space:pre;">Группы управления</div>
<div style="position:absolute;left:265px;top:101px;width:25px;height:773px;background:#d6d9df"></div>
<div style="position:absolute;left:264px;top:101px;width:1px;height:911px;background:#bcc0c9"></div>
<div style="position:absolute;left:265px;top:186px;width:25px;height:1px;background:#bfc3cb"></div>
<div style="position:absolute;left:265px;top:101px;width:25px;height:1px;background:#e3e5ea"></div>
<div style="position:absolute;left:265px;top:293px;width:25px;height:1px;background:#bfc3cb"></div>
<div style="position:absolute;left:265px;top:187px;width:25px;height:1px;background:#e3e5ea"></div>
<div style="position:absolute;left:265px;top:393px;width:25px;height:1px;background:#bfc3cb"></div>
<div style="position:absolute;left:265px;top:294px;width:25px;height:1px;background:#e3e5ea"></div>
<div style="position:absolute;left:265px;top:562px;width:25px;height:1px;background:#bfc3cb"></div>
<div style="position:absolute;left:265px;top:394px;width:25px;height:1px;background:#e3e5ea"></div>
<div style="position:absolute;left:263px;top:563px;width:28px;height:140px;background:#fff;border:1px solid #c3c7d0;border-left:none;border-radius:0 2px 2px 0"></div>
<div style="position:absolute;left:265px;top:839px;width:25px;height:1px;background:#bfc3cb"></div>
<div style="position:absolute;left:265px;top:703px;width:25px;height:1px;background:#e3e5ea"></div>
<div style="position:absolute;left:265px;top:874px;width:25px;height:1px;background:#bfc3cb"></div>
<div style="position:absolute;left:265px;top:840px;width:25px;height:1px;background:#e3e5ea"></div>
<div style="position:absolute;left:284.6px;top:130.6px;height:14px;line-height:14px;font-size:11.5px;color:#50545c;letter-spacing:-0.448px;white-space:pre;transform-origin:0 0;transform:rotate(90deg)">Archimate</div>
<div style="position:absolute;left:284.6px;top:214.9px;height:14px;line-height:14px;font-size:11.5px;color:#50545c;letter-spacing:-0.321px;white-space:pre;transform-origin:0 0;transform:rotate(90deg)">Деятельность</div>
<div style="position:absolute;left:284.6px;top:321.9px;height:14px;line-height:14px;font-size:11.5px;color:#50545c;letter-spacing:-0.543px;white-space:pre;transform-origin:0 0;transform:rotate(90deg)">Оргединицы</div>
<div style="position:absolute;left:284.6px;top:423.6px;height:14px;line-height:14px;font-size:11.5px;color:#50545c;letter-spacing:-0.320px;white-space:pre;transform-origin:0 0;transform:rotate(90deg)">Функциональные объекты</div>
<div style="position:absolute;left:286.0px;top:591.6px;height:14px;line-height:14px;font-size:11.5px;color:#50545c;letter-spacing:-0.207px;white-space:pre;transform-origin:0 0;transform:rotate(90deg)">Методы управления</div>
<div style="position:absolute;left:284.6px;top:730.6px;height:14px;line-height:14px;font-size:11.5px;color:#50545c;letter-spacing:-0.134px;white-space:pre;transform-origin:0 0;transform:rotate(90deg)">Группы управления</div>
<svg style="left:269px;top:109px" width="17" height="17" viewBox="0 0 17 17" fill="none" stroke="#3a3a3a" stroke-width="1" stroke-linejoin="round"><path d="M8.50 4.10L6.55 7.48L2.65 7.48L0.70 4.10L2.65 0.72L6.55 0.72ZM16.00 8.00L14.05 11.38L10.15 11.38L8.20 8.00L10.15 4.62L14.05 4.62ZM8.50 12.30L6.55 15.68L2.65 15.68L0.70 12.30L2.65 8.92L6.55 8.92Z"/></svg>
<svg style="left:269px;top:196px" width="17" height="15" viewBox="0 0 17 15" fill="none" stroke="#3a3a3a" stroke-width="1" stroke-linejoin="round"><path d="M3.3 2.7H13.4L12 5.3H3.3Z" fill="#8c8c8c" stroke="none"/><path d="M3.3 5.3V2.7H13.4Q15.4 3.8 16 6.4L14.6 8.6"/><path d="M1.3 5.3H12L14.5 8.7L12 11.8H1.3L2.5 8.6Z"/></svg>
<svg style="left:269px;top:303px" width="17" height="15" viewBox="0 0 17 15" fill="#0c0c0c"><circle cx="3.4" cy="3.1" r="1.55"/><circle cx="13.9" cy="3.1" r="1.55"/><ellipse cx="8.4" cy="4.8" rx="2.45" ry="3.1"/><path d="M0.3 8.6Q0.2 5.6 2 5.2L3.4 7.2L4.8 5.2Q5.6 5.3 5.6 6.2L4.6 8.6Z"/><path d="M16.9 8.6Q17 5.6 15.2 5.2L13.8 7.2L12.4 5.2Q11.6 5.3 11.6 6.2L12.6 8.6Z"/><path d="M3.3 13.8Q3.1 9.8 6.2 8.9L7.9 13.4L8.4 10.2L8.9 13.4L10.6 8.9Q13.7 9.8 13.5 13.8Z"/></svg>
<svg style="left:269px;top:402px" width="17" height="17" viewBox="0 0 17 17" fill="#e9eaec" stroke="#222" stroke-width="1.1" stroke-linejoin="round"><path d="M12.02 7.05L8.30 9.20L4.58 7.05L4.58 2.75L8.30 0.60L12.02 2.75ZM8.32 13.35L4.60 15.50L0.88 13.35L0.88 9.05L4.60 6.90L8.32 9.05ZM15.72 13.35L12.00 15.50L8.28 13.35L8.28 9.05L12.00 6.90L15.72 9.05Z"/><circle cx="8.3" cy="4.9" r="1.15" fill="#000" stroke="none"/><circle cx="4.6" cy="11.2" r="1.15" fill="#000" stroke="none"/><circle cx="12" cy="11.2" r="1.15" fill="#000" stroke="none"/></svg>
<svg style="left:271px;top:572.2px" width="15" height="15" viewBox="0 0 15 15" fill="none" stroke="#222" stroke-width="1"><circle cx="7.5" cy="7.5" r="5.3"/><circle cx="7.5" cy="7.5" r="1.7" stroke-width="1.1"/><path d="M7.5 0.6V5.8M7.5 9.2V14.4M0.6 7.5H5.8M9.2 7.5H14.4M2.7 2.7L6.3 6.3M8.7 8.7L12.3 12.3M12.3 2.7L8.7 6.3M6.3 8.7L2.7 12.3" stroke-width="0.9"/><g fill="#222" stroke="none"><circle cx="3.75" cy="3.75" r="0.95"/><circle cx="11.25" cy="3.75" r="0.95"/><circle cx="3.75" cy="11.25" r="0.95"/><circle cx="11.25" cy="11.25" r="0.95"/><circle cx="7.5" cy="2.2" r="0.8"/><circle cx="7.5" cy="12.8" r="0.8"/><circle cx="2.2" cy="7.5" r="0.8"/><circle cx="12.8" cy="7.5" r="0.8"/></g></svg>
<svg style="left:269px;top:711px" width="17" height="17" viewBox="0 0 17 17"><g fill="none" stroke="#222" stroke-width="1.1"><path d="M3 1.8Q3 0.8 4.2 0.8H15Q16.2 0.8 16.2 2V13" stroke="#666" stroke-width="0.8"/><rect x="0.8" y="2" width="14.2" height="14.2" rx="2.4"/><rect x="3.6" y="5.4" width="5.4" height="5" rx="1.4" stroke-width="1"/><rect x="6.6" y="7.6" width="5.6" height="5.2" rx="1.4" fill="#fff" stroke-width="1"/></g></svg>
<svg style="left:270px;top:848px" width="16" height="18" viewBox="0 0 16 18" fill="none" stroke="#333" stroke-width="1.3"><path d="M8.4 2H3.4Q2 2 2 3.4V14.2Q2 15.6 3.4 15.6H11.6Q13 15.6 13 14.2V10"/><path d="M12.8 0.8V6.8M9.8 3.8H15.8M10.7 1.7L14.9 5.9M14.9 1.7L10.7 5.9" stroke-width="0.7"/></svg>
<div style="position:absolute;left:298px;top:53px;width:1624px;height:23px;background:#e9ebef"></div>
<div style="position:absolute;left:300px;top:55px;width:362px;height:21px;background:linear-gradient(#e3e5e9,#dadde2);border:1px solid #c4c8cf;border-bottom:none;border-radius:2px 2px 0 0"></div>
<div style="position:absolute;left:308.10px;top:57.73px;height:16px;line-height:16px;font-size:11.4px;font-weight:400;color:#444950;letter-spacing:-0.086px;white-space:pre;">A2.3.2 Осуществить поиск и выбор поставщика (Функция EPC)</div>
<div style="position:absolute;left:298px;top:75px;width:1624px;height:943px;background:#fff;border:1px solid #b9bec8;border-bottom:1px solid #c9cdd4"></div>
<div style="position:absolute;left:299px;top:76px;width:1622px;height:29px;background:linear-gradient(#fdfdfd,#f5f6f8 55%,#eef0f3)"></div>
<div style="position:absolute;left:299px;top:105px;width:1622px;height:1px;background:#c6cad1"></div>
<div style="position:absolute;left:662px;top:53px;width:281px;height:23px;background:linear-gradient(#f8f9fa,#f3f4f7);border:1px solid #b9bec8;border-bottom:none;border-radius:2px 2px 0 0"></div>
<div style="position:absolute;left:669.50px;top:57.33px;height:16px;line-height:16px;font-size:11.4px;font-weight:400;color:#2c3036;letter-spacing:-0.063px;white-space:pre;">RP3.3 Увеличение ротации персонала (Угроза)</div>
<svg style="left:927px;top:61px" width="8" height="8" viewBox="0 0 8 8"><path d="M1.5 1.5L6.5 6.5M6.5 1.5L1.5 6.5" stroke="#4a4a4a" stroke-width="1.35"/></svg>
<svg style="left:1906px;top:62px" width="8" height="5" viewBox="0 0 8 5"><path d="M0.5 0.5H7.5L4 4.5Z" fill="#1c3fa8"/></svg>
<svg style="left:309px;top:80px" width="17" height="19" viewBox="0 0 17 19" fill="none" stroke="#222" stroke-width="1.4"><circle cx="10.2" cy="6.8" r="5.7"/><path d="M7.3 6.8H13.1M10.2 3.9V9.7" stroke-width="1.7"/><path d="M6.2 11.2L0.8 17.4" stroke-width="1.7"/></svg>
<div style="position:absolute;left:334.90px;top:82.02px;height:16px;line-height:16px;font-size:11.5px;font-weight:700;color:#222;letter-spacing:0.000px;white-space:pre;transform-origin:0 50%;transform:scaleX(0.9323);">1:1</div>
<svg style="left:361px;top:80px" width="17" height="19" viewBox="0 0 17 19" fill="none" stroke="#222" stroke-width="1.4"><circle cx="10.2" cy="6.8" r="5.7"/><path d="M7.3 6.8H13.1" stroke-width="1.7"/><path d="M6.2 11.2L0.8 17.4" stroke-width="1.7"/></svg>
<svg style="left:386.5px;top:81px" width="17" height="17" viewBox="0 0 17 17" fill="#111"><path d="M0.5 0.5H6L0.5 6ZM16.5 0.5V6L11 0.5ZM0.5 16.5V11L6 16.5ZM16.5 16.5H11L16.5 11Z"/></svg>
<svg style="left:412px;top:83px" width="18" height="13" viewBox="0 0 18 13"><path d="M15.2 11.8Q16 3.9 9 3.9Q7 3.9 5.4 4.8" fill="none" stroke="#111" stroke-width="2.6"/><path d="M0.4 7.2L6.4 1.8L8.6 9.4Z" fill="#111"/></svg>
<svg style="left:438.5px;top:83px" width="18" height="13" viewBox="0 0 18 13"><path d="M2.8 11.8Q2 3.9 9 3.9Q11 3.9 12.6 4.8" fill="none" stroke="#929292" stroke-width="2.6"/><path d="M17.6 7.2L11.6 1.8L9.4 9.4Z" fill="#929292"/></svg>
<svg style="left:463.5px;top:80px" width="19" height="19" viewBox="0 0 19 19" fill="none" stroke="#222" stroke-width="1.5"><path d="M15.2 5.4A7.6 7.6 0 1 0 17 11.6"/><path d="M17.6 1.2V7.4H11.4Z" fill="#222" stroke="none"/></svg>
<svg style="left:490px;top:80.5px" width="17" height="19" viewBox="0 0 17 19"><path d="M2.2 9V1.6Q2.2 0.7 3.1 0.7H10.6L14.8 4.9V9" fill="none" stroke="#333" stroke-width="1.1"/><path d="M10.4 1V5.2H14.6" fill="none" stroke="#333" stroke-width="1"/><path d="M4 3.6H8.6M4 6H8.6" stroke="#888" stroke-width="0.8"/><rect x="0.3" y="9" width="16.4" height="7.6" rx="1" fill="#222"/><path d="M2.2 16.6V18.2H14.8V16.6" fill="none" stroke="#333" stroke-width="1.1"/><text x="8.5" y="15.2" font-size="6.6" font-weight="700" fill="#fff" text-anchor="middle" font-family='"Liberation Sans",sans-serif' textLength="13.6" lengthAdjust="spacingAndGlyphs">SVG</text></svg>
<svg style="left:516px;top:80.5px" width="17" height="19" viewBox="0 0 17 19"><path d="M2.2 9V1.6Q2.2 0.7 3.1 0.7H10.6L14.8 4.9V9" fill="none" stroke="#333" stroke-width="1.1"/><path d="M10.4 1V5.2H14.6" fill="none" stroke="#333" stroke-width="1"/><path d="M4 3.6H8.6M4 6H8.6" stroke="#888" stroke-width="0.8"/><rect x="0.3" y="9" width="16.4" height="7.6" rx="1" fill="#222"/><path d="M2.2 16.6V18.2H14.8V16.6" fill="none" stroke="#333" stroke-width="1.1"/><text x="8.5" y="15.2" font-size="6.6" font-weight="700" fill="#fff" text-anchor="middle" font-family='"Liberation Sans",sans-serif' textLength="13.6" lengthAdjust="spacingAndGlyphs">PNG</text></svg>
<div style="position:absolute;left:540px;top:78px;width:1px;height:24px;background:#d0d3d9"></div>
<svg style="left:547px;top:80px" width="19" height="19" viewBox="0 0 19 19" fill="none" stroke="#222" stroke-width="1"><rect x="6" y="6.2" width="7" height="6.6" rx="1.2" stroke-width="1.2"/><path d="M9.5 0.6V5M8 3L9.5 5L11 3M9.5 18.4V14M8 16L9.5 14L11 16M0.6 9.5H5M3 8L5 9.5L3 11M18.4 9.5H14M16 8L14 9.5L16 11"/></svg>
<svg style="left:573px;top:80.5px" width="19" height="18" viewBox="0 0 19 18" fill="none" stroke="#222" stroke-width="1.1"><circle cx="9.5" cy="3" r="2"/><circle cx="3" cy="14.6" r="2"/><circle cx="9.5" cy="14.6" r="2"/><circle cx="16" cy="14.6" r="2"/><path d="M8.6 4.8L3.8 12.8M9.5 5V12.6M10.4 4.8L15.2 12.8"/></svg>
<svg style="left:598.5px;top:80px" width="18" height="19" viewBox="0 0 18 19"><rect x="0.7" y="0.7" width="16.6" height="17.2" rx="1.5" fill="#fff" stroke="#222" stroke-width="1.3"/><rect x="0.7" y="0.7" width="16.6" height="3.2" fill="#222"/>
<path d="M3 7.2H6.4M3 10.6H6.4M3 14H6.4" stroke="#222" stroke-width="1.5"/><path d="M8.6 7.2H15M8.6 10.6H15M8.6 14H15" stroke="#a4a4a4" stroke-width="2"/></svg>
<div style="position:absolute;left:622.80px;top:81.11px;height:16px;line-height:16px;font-size:11.6px;font-weight:400;color:#333;letter-spacing:0.000px;white-space:pre;transform-origin:0 50%;transform:scaleX(0.9370);">Стили</div>
<svg style="left:662px;top:87px" width="8" height="4" viewBox="0 0 8 4"><path d="M0 0H8L4 4Z" fill="#222"/></svg>
<div style="position:absolute;left:688.30px;top:81.56px;height:16px;line-height:16px;font-size:11px;font-weight:400;color:#999;letter-spacing:-0.286px;white-space:pre;">...</div>
<div style="position:absolute;left:299px;top:106px;width:77px;height:912px;background:#fff"></div>
<div style="position:absolute;left:375px;top:106px;width:1px;height:912px;background:#c9cdd3"></div>
<div style="position:absolute;left:299px;top:106px;width:76px;height:29.5px;background:#d9dce2"></div>
<div style="position:absolute;left:310.80px;top:112.30px;height:16px;line-height:16px;font-size:11.1px;font-weight:400;color:#5f6368;letter-spacing:-0.020px;white-space:pre;">Основные</div>
<div style="position:absolute;left:299px;top:250px;width:76px;height:30px;background:#d9dce2"></div>
<div style="position:absolute;left:303.50px;top:256.55px;height:16px;line-height:16px;font-size:11.1px;font-weight:400;color:#5f6368;letter-spacing:-0.052px;white-space:pre;">Справочники</div>
<div style="position:absolute;left:299px;top:356px;width:76px;height:30px;background:#d9dce2"></div>
<div style="position:absolute;left:317.60px;top:362.55px;height:16px;line-height:16px;font-size:11.1px;font-weight:400;color:#5f6368;letter-spacing:0.119px;white-space:pre;">Прочее</div>
<div style="position:absolute;left:323px;top:151px;width:26px;height:8px;background:#fde06a;border:1px solid #333;border-radius:1px"></div>
<div style="position:absolute;left:323px;top:189px;width:26px;height:8px;background:#b0c2da;border:1px solid #333;border-radius:1px"></div>
<div style="position:absolute;left:323px;top:227px;width:26px;height:8px;background:#f6ad6e;border:1px solid #333;border-radius:1px"></div>
<div style="position:absolute;left:323px;top:295px;width:26px;height:8px;background:#9cbb5c;border:1px solid #333;border-radius:1px"></div>
<div style="position:absolute;left:323px;top:333px;width:26px;height:8px;background:#e6ebf5;border:1px solid #333;border-radius:1px"></div>
<svg style="left:325px;top:394px" width="22" height="20" viewBox="0 0 22 20" fill="none" stroke="#111" stroke-width="1.2" stroke-dasharray="1.2 1.2"><rect x="6" y="2.2" width="14.6" height="11.6"/><path d="M6 10.5L0.6 19"/></svg>
<svg style="left:325px;top:430px" width="22" height="26" viewBox="0 0 22 26" fill="none" stroke="#333" stroke-width="1"><path d="M6 1.5H13" stroke-width="1.2"/><path d="M6 4.5H21" stroke-width="1.4"/><g stroke="#111" stroke-width="1.2" stroke-dasharray="1.2 1.2"><rect x="6" y="8" width="14.6" height="11.6"/><path d="M6 16.5L0.6 25"/></g></svg>
<div style="position:absolute;left:376px;top:106px;width:1545px;height:912px;background-color:#fff;background-image:linear-gradient(to right,#ededed 1px,transparent 1px),linear-gradient(to bottom,#ededed 1px,transparent 1px);background-size:18.02px 18.02px;background-position:5.2px 1.2px"></div>
<div style="position:absolute;left:3px;top:1018px;width:1919px;height:2px;background:linear-gradient(#c6c9ce,#d0d3d8)"></div>
<div style="position:absolute;left:3px;top:1020px;width:1919px;height:22px;background:linear-gradient(#e6e8ec,#d7dadf 55%,#c3c8d0)"></div>
<div style="position:absolute;left:3px;top:1042px;width:1919px;height:1px;background:#dde0e6"></div>
<div style="position:absolute;left:3px;top:1043px;width:1921px;height:1px;background:#0c0c0c"></div>
<div style="position:absolute;left:1582px;top:1022px;width:1px;height:19px;background:linear-gradient(rgba(184,188,196,0.3),#b8bcc4 30%,#b8bcc4 75%,rgba(184,188,196,0.3))"></div>
<div style="position:absolute;left:1583px;top:1022px;width:1px;height:19px;background:linear-gradient(rgba(240,241,244,0.2),#eceef1 30%,#e4e6ea 75%,rgba(240,241,244,0.2))"></div>
<div style="position:absolute;left:1636px;top:1022px;width:1px;height:19px;background:linear-gradient(rgba(184,188,196,0.3),#b8bcc4 30%,#b8bcc4 75%,rgba(184,188,196,0.3))"></div>
<div style="position:absolute;left:1637px;top:1022px;width:1px;height:19px;background:linear-gradient(rgba(240,241,244,0.2),#eceef1 30%,#e4e6ea 75%,rgba(240,241,244,0.2))"></div>
<div style="position:absolute;left:1705px;top:1022px;width:1px;height:19px;background:linear-gradient(rgba(184,188,196,0.3),#b8bcc4 30%,#b8bcc4 75%,rgba(184,188,196,0.3))"></div>
<div style="position:absolute;left:1706px;top:1022px;width:1px;height:19px;background:linear-gradient(rgba(240,241,244,0.2),#eceef1 30%,#e4e6ea 75%,rgba(240,241,244,0.2))"></div>
<div style="position:absolute;left:1885px;top:1022px;width:1px;height:19px;background:linear-gradient(rgba(184,188,196,0.3),#b8bcc4 30%,#b8bcc4 75%,rgba(184,188,196,0.3))"></div>
<div style="position:absolute;left:1886px;top:1022px;width:1px;height:19px;background:linear-gradient(rgba(240,241,244,0.2),#eceef1 30%,#e4e6ea 75%,rgba(240,241,244,0.2))"></div>
<div style="position:absolute;left:1588.50px;top:1023.64px;height:16px;line-height:16px;font-size:11.3px;font-weight:400;color:#33373e;letter-spacing:-0.170px;white-space:pre;">Русский</div>
<div style="position:absolute;left:1643.40px;top:1023.64px;height:16px;line-height:16px;font-size:11.3px;font-weight:400;color:#33373e;letter-spacing:-0.183px;white-space:pre;">20.10.2023</div>
<div style="position:absolute;left:1711.90px;top:1023.64px;height:16px;line-height:16px;font-size:11.3px;font-weight:400;color:#33373e;letter-spacing:-0.114px;white-space:pre;">Период: 01.01.2023 - 31.12.2023</div>
<svg style="left:1891px;top:1024px" width="18" height="16" viewBox="0 0 18 16"><path d="M2.4 1H15.2Q16.6 1 16.6 2.4V10.4Q16.6 11.8 15.2 11.8H10.6L8.6 14.4L6.8 11.8H2.4Q1 11.8 1 10.4V2.4Q1 1 2.4 1Z" fill="none" stroke="#3a3a3a" stroke-width="1.2"/></svg>
<svg style="left:0;top:0" width="1924" height="1044" viewBox="0 0 1924 1044"><path d="M797 306L940.2 306L940.2 522L963.4 522" fill="none" stroke="#3f4042" stroke-width="1.75" stroke-linejoin="miter"/><path d="M975.6 522L963.0 515.4V528.6Z" fill="#000"/><path d="M799 540L963.4 540" fill="none" stroke="#3f4042" stroke-width="1.75" stroke-linejoin="miter"/><path d="M975.6 540L963.0 533.4V546.6Z" fill="#000"/><path d="M797 792L940.2 792L940.2 558L963.4 558" fill="none" stroke="#3f4042" stroke-width="1.75" stroke-linejoin="miter"/><path d="M975.6 558L963.0 551.4V564.6Z" fill="#000"/><path d="M1241 504L1241 234L1521.4 234" fill="none" stroke="#3f4042" stroke-width="1.75" stroke-linejoin="miter"/><path d="M1533.6000000000001 234L1521.0 227.4V240.6Z" fill="#000"/><path d="M1265 522L1318 522L1318 396L1521.4 396" fill="none" stroke="#3f4042" stroke-width="1.75" stroke-linejoin="miter"/><path d="M1533.6000000000001 396L1521.0 389.4V402.6Z" fill="#000"/><path d="M1265 558L1521.4 558" fill="none" stroke="#3f4042" stroke-width="1.75" stroke-linejoin="miter"/><path d="M1533.6000000000001 558L1521.0 551.4V564.6Z" fill="#000"/><path d="M1241 576L1241 738L1521.4 738" fill="none" stroke="#3f4042" stroke-width="1.75" stroke-linejoin="miter"/><path d="M1533.6000000000001 738L1521.0 731.4V744.6Z" fill="#000"/><path d="M1048.2 576L1048.2 828L1084 828" fill="none" stroke="#3f4042" stroke-width="1.75" stroke-linejoin="miter"/><path d="M850.2 307.3V342" stroke="#2a2a2a" stroke-width="1.5" stroke-dasharray="2.4 2.37" fill="none"/><path d="M850.2 541.3V576" stroke="#2a2a2a" stroke-width="1.5" stroke-dasharray="2.4 2.37" fill="none"/><path d="M850.2 793.3V828" stroke="#2a2a2a" stroke-width="1.5" stroke-dasharray="2.4 2.37" fill="none"/><path d="M1390.2 235.3V270" stroke="#2a2a2a" stroke-width="1.5" stroke-dasharray="2.4 2.37" fill="none"/><path d="M1444.3 397.3V432" stroke="#2a2a2a" stroke-width="1.5" stroke-dasharray="2.4 2.37" fill="none"/><path d="M1426.2 559.3V594" stroke="#2a2a2a" stroke-width="1.5" stroke-dasharray="2.4 2.37" fill="none"/><path d="M1426.2 739.3V774" stroke="#2a2a2a" stroke-width="1.5" stroke-dasharray="2.4 2.37" fill="none"/><rect x="544.85" y="269.85" width="251.50" height="71.70" fill="#b0c2da" stroke="rgba(0,0,0,0.7)" stroke-width="1.7"/><rect x="580.15" y="504.25" width="218.20" height="71.50" fill="#b0c2da" stroke="rgba(0,0,0,0.7)" stroke-width="1.7"/><rect x="579.85" y="756.25" width="216.30" height="71.50" fill="#b0c2da" stroke="rgba(0,0,0,0.7)" stroke-width="1.7"/><rect x="976.05" y="504.25" width="288.30" height="71.50" fill="#fddf68" stroke="rgba(0,0,0,0.7)" stroke-width="1.7"/><rect x="1084.25" y="792.45" width="215.50" height="70.90" fill="#9cbb5d" stroke="rgba(0,0,0,0.7)" stroke-width="1.7"/><rect x="1534.25" y="198.25" width="215.90" height="71.50" fill="#f6ae6e" stroke="rgba(0,0,0,0.7)" stroke-width="1.7"/><rect x="1534.25" y="360.45" width="215.90" height="71.30" fill="#f6ae6e" stroke="rgba(0,0,0,0.7)" stroke-width="1.7"/><rect x="1534.25" y="522.45" width="215.90" height="71.30" fill="#f6ae6e" stroke="rgba(0,0,0,0.7)" stroke-width="1.7"/><rect x="1534.25" y="702.45" width="215.90" height="71.10" fill="#f6ae6e" stroke="rgba(0,0,0,0.7)" stroke-width="1.7"/><rect x="832.15" y="342.15" width="35.60" height="71.60" fill="#e6ebf5" stroke="rgba(0,0,0,0.7)" stroke-width="1.7"/><rect x="832.15" y="576.25" width="35.60" height="71.50" fill="#e6ebf5" stroke="rgba(0,0,0,0.7)" stroke-width="1.7"/><rect x="832.15" y="828.35" width="35.60" height="71.60" fill="#e6ebf5" stroke="rgba(0,0,0,0.7)" stroke-width="1.7"/><rect x="1372.35" y="270.15" width="35.50" height="71.40" fill="#e6ebf5" stroke="rgba(0,0,0,0.7)" stroke-width="1.7"/><rect x="1426.85" y="432.35" width="35.00" height="71.40" fill="#e6ebf5" stroke="rgba(0,0,0,0.7)" stroke-width="1.7"/><rect x="1408.55" y="594.45" width="35.20" height="71.40" fill="#e6ebf5" stroke="rgba(0,0,0,0.7)" stroke-width="1.7"/><rect x="1408.55" y="774.55" width="35.30" height="71.30" fill="#e6ebf5" stroke="rgba(0,0,0,0.7)" stroke-width="1.7"/></svg>
<div class="dt" style="left:520.5px;top:246.88px;width:300px">Численность работников</div>
<div class="dt" style="left:521.0px;top:298.88px;width:300px">Увеличение количества проектов</div>
<div class="dt" style="left:700.0px;top:422.88px;width:300px">Сформировать резерв
кадров</div>
<div class="dt" style="left:539.3px;top:480.88px;width:300px">Рынок товаров и услуг</div>
<div class="dt" style="left:539.3px;top:532.88px;width:300px">Расширение географии проектов</div>
<div class="dt" style="left:700.0px;top:656.88px;width:300px">Сформировать резерв
кадров</div>
<div class="dt" style="left:538.0px;top:733.27px;width:300px">Квалификация работников</div>
<div class="dt" style="left:538.0px;top:778.88px;width:300px">Изменение требований к
должностям</div>
<div class="dt" style="left:700.0px;top:909.38px;width:300px">Разработать методы
привлечения
внутренних кандидатов</div>
<div class="dt" style="left:970.2px;top:532.88px;width:300px">RP3.3 Увеличение ротации персонала</div>
<div class="dt" style="left:1042.0px;top:814.57px;width:300px">Процент квалифицированных
сотрудников</div>
<div class="dt" style="left:1492.2px;top:226.88px;width:300px">Кадровый дефицит в компании</div>
<div class="dt" style="left:1240.1px;top:350.88px;width:300px">Создать
подразделение по
подбору персонала</div>
<div class="dt" style="left:1492.2px;top:382.27px;width:300px">Увеличение сроков закрытия
вакансий</div>
<div class="dt" style="left:1294.3px;top:513.07px;width:300px">Разработать план
закрытия вакансий на
год</div>
<div class="dt" style="left:1492.2px;top:498.97px;width:300px">Финансы</div>
<div class="dt" style="left:1492.2px;top:544.57px;width:300px">Превышение сроков
выполнения работ</div>
<div class="dt" style="left:1276.2px;top:675.17px;width:300px">Разработать методы
привлечения внешних
кандидатов</div>
<div class="dt" style="left:1492.2px;top:678.98px;width:300px">Финансы</div>
<div class="dt" style="left:1492.2px;top:724.57px;width:300px">Выполнение работ в неполном
объеме</div>
<div class="dt" style="left:1276.2px;top:855.17px;width:300px">Разработать методы
привлечения внешних
кандидатов</div>
</body></html>
